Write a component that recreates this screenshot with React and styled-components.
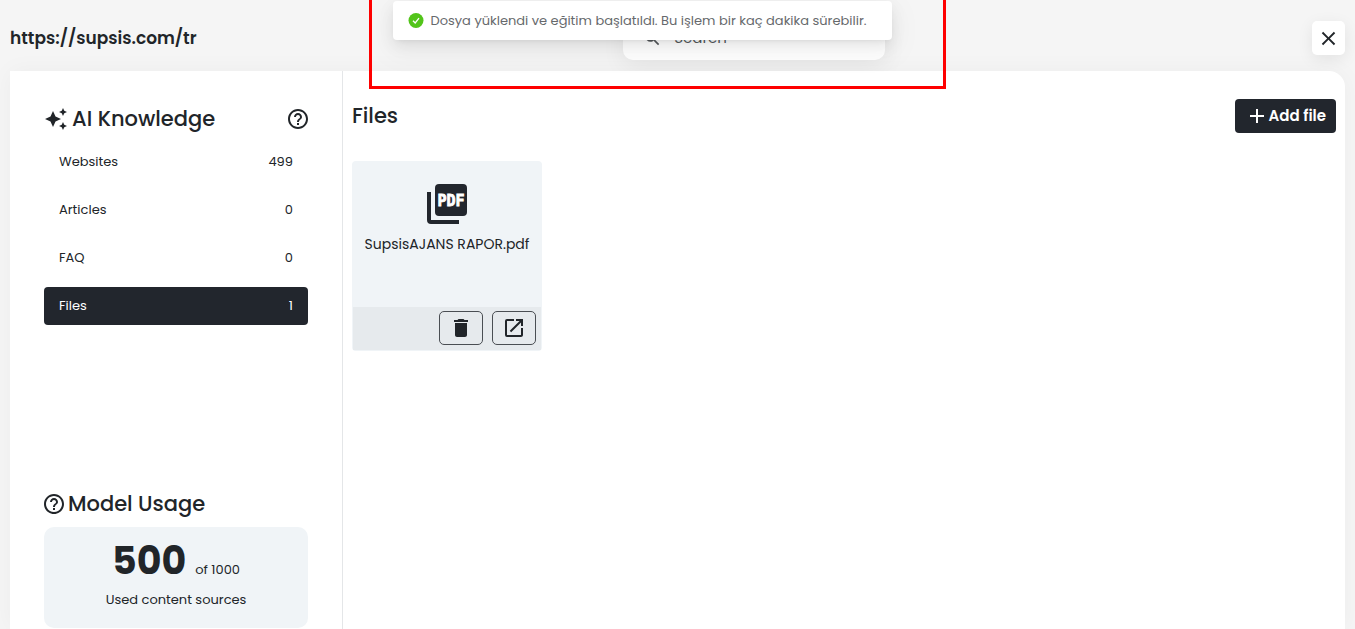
import React from "react";
import styled, { createGlobalStyle } from "styled-components";
import {
  MdAdd,
  MdAutoAwesome,
  MdClose,
  MdDelete,
  MdHelpOutline,
  MdOpenInNew,
  MdSearch,
} from "react-icons/md";

const ink = "#212529";
const dark = "#22262d";
const tint = "#f0f4f7";

const GlobalStyle = createGlobalStyle`
  *, *::before, *::after { box-sizing: border-box; }
  body {
    margin: 0;
    background: #f5f5f5;
    color: ${ink};
    font-family: Poppins, Inter, "Open Sans", sans-serif;
    font-size: 13px;
    line-height: 22px;
  }
  button, input { font: inherit; color: inherit; }
  h1, h2, p { margin: 0; }
  svg { flex-shrink: 0; }
`;

const Page = styled.div`
  position: relative;
  display: flex;
  flex-direction: column;
  min-height: 100vh;
  padding: 0 10px;
  overflow: hidden;
`;

const Header = styled.header`
  display: flex;
  align-items: center;
  justify-content: space-between;
  padding: 16px 0 11px;
`;

const SiteTitle = styled.h1`
  font-size: 17px;
  line-height: 28px;
  font-weight: 600;
`;

const SearchBox = styled.label`
  display: flex;
  align-items: center;
  gap: 12px;
  width: 262px;
  height: 44px;
  padding: 0 20px;
  border-radius: 10px;
  background: #fff;
  color: #55595c;
  font-size: 15px;
  box-shadow: 0 8px 24px rgba(0, 0, 0, 0.06);
`;

const SearchInput = styled.input`
  flex: 1;
  min-width: 0;
  padding: 0;
  border: 0;
  outline: 0;
  background: transparent;
  &::placeholder {
    color: #55595c;
    opacity: 1;
  }
`;

const CloseButton = styled.button`
  display: grid;
  place-items: center;
  width: 33px;
  height: 34px;
  padding: 0;
  border: 0;
  border-radius: 5px;
  background: #fff;
  box-shadow: 0 4px 16px rgba(0, 0, 0, 0.08);
`;

const Panel = styled.div`
  flex: 1;
  display: grid;
  grid-template-columns: 333px 1fr;
  border-radius: 0 16px 0 0;
  background: #fff;
  box-shadow: 0 0 24px rgba(0, 0, 0, 0.04);
`;

const Sidebar = styled.aside`
  display: flex;
  flex-direction: column;
  padding: 32px 34px 1px;
  border-right: 1px solid #e4e6e8;
`;

const SectionTitle = styled.h2`
  display: flex;
  align-items: center;
  gap: 4px;
  font-size: 21px;
  line-height: 32px;
  font-weight: 500;
`;

const SidebarHead = styled.div`
  display: flex;
  align-items: center;
  justify-content: space-between;
  margin-right: -2px;
`;

const IconButton = styled.button`
  display: flex;
  padding: 0;
  border: 0;
  background: transparent;
`;

const Nav = styled.nav`
  display: flex;
  flex-direction: column;
  gap: 10px;
  padding: 8px 0 40px;
`;

const NavItem = styled.a`
  display: flex;
  justify-content: space-between;
  padding: 8px 15px;
  border-radius: 4px;
  text-decoration: none;
  color: ${(p) => (p.$active ? "#fff" : ink)};
  background: ${(p) => (p.$active ? dark : "transparent")};
`;

const Usage = styled.section`
  display: flex;
  flex-direction: column;
  gap: 7px;
  margin-top: auto;
`;

const UsageTitle = styled(SectionTitle)`
  gap: 2px;
  margin-left: -2px;
`;

const UsageCard = styled.div`
  display: flex;
  flex-direction: column;
  align-items: center;
  gap: 4px;
  padding: 10px 16px 17px;
  border-radius: 10px;
  background: ${tint};
`;

const UsageCount = styled.p`
  display: flex;
  align-items: baseline;
  gap: 9px;
`;

const UsageNumber = styled.strong`
  font-size: 38px;
  line-height: 48px;
  font-weight: 700;
`;

const Main = styled.main`
  padding: 28px 9px;
`;

const MainHead = styled.div`
  display: flex;
  align-items: center;
  justify-content: space-between;
`;

const AddButton = styled.button`
  display: flex;
  align-items: center;
  height: 34px;
  padding: 0 10px;
  border: 0;
  border-radius: 4px;
  background: ${dark};
  color: #fff;
  font-size: 15px;
  font-weight: 600;
`;

const FileGrid = styled.div`
  display: flex;
  flex-wrap: wrap;
  gap: 16px;
  padding-top: 28px;
`;

const FileCard = styled.article`
  display: flex;
  flex-direction: column;
  justify-content: space-between;
  width: 190px;
  min-height: 190px;
  padding: 0 1px 1px;
  border-radius: 4px;
  background: ${tint};
`;

const FileBody = styled.div`
  display: flex;
  flex-direction: column;
  align-items: center;
  gap: 5px;
  padding-top: 19px;
`;

const FileName = styled.p`
  font-size: 14px;
  white-space: nowrap;
`;

const FileActions = styled.div`
  display: flex;
  justify-content: flex-end;
  gap: 9px;
  padding: 4px 5px 5px;
  background: #e6eaed;
`;

const OutlineButton = styled.button`
  display: grid;
  place-items: center;
  width: 44px;
  height: 34px;
  padding: 0;
  border: 1px solid #4a4e53;
  border-radius: 5px;
  background: transparent;
`;

const Toast = styled.div`
  position: absolute;
  top: 1px;
  left: calc(50% - 285px);
  z-index: 2;
  display: flex;
  align-items: center;
  gap: 7px;
  width: 499px;
  height: 39px;
  padding: 0 15px;
  border-radius: 4px;
  background: #fff;
  color: #66696c;
  white-space: nowrap;
  box-shadow: 0 3px 6px -4px rgba(0, 0, 0, 0.12),
    0 6px 16px rgba(0, 0, 0, 0.08), 0 9px 28px 8px rgba(0, 0, 0, 0.03);
`;

const Highlight = styled.div`
  position: absolute;
  top: 0;
  left: calc(50% - 309px);
  z-index: 1;
  width: 577px;
  height: 89px;
  border: 3px solid #fe0000;
  border-top: 0;
  pointer-events: none;
`;

const items = [
  { name: "Websites", count: 499 },
  { name: "Articles", count: 0 },
  { name: "FAQ", count: 0 },
  { name: "Files", count: 1, active: true },
];

function PdfIcon() {
  return (
    <svg width="48" height="48" viewBox="0 0 48 48" aria-hidden="true">
      <path d="M4 12h4v28h28v4H8a4 4 0 0 1-4-4z" fill={dark} />
      <rect x="12" y="4" width="32" height="32" rx="4" fill={dark} />
      <text
        x="28"
        y="26"
        textAnchor="middle"
        fill="#fff"
        stroke="#fff"
        strokeWidth="0.8"
        fontFamily="'DejaVu Sans Mono', monospace"
        fontSize="15"
        fontWeight="700"
      >
        PDF
      </text>
    </svg>
  );
}

function CheckBadge() {
  return (
    <svg width="16" height="16" viewBox="0 0 16 16" aria-hidden="true">
      <circle cx="8" cy="7.5" r="7.5" fill="#52c41a" />
      <path d="M5 7.7l2.2 2.3L11 5.2" fill="none" stroke="#fff" strokeWidth="1.3" />
    </svg>
  );
}

export default function App() {
  return (
    <>
      <GlobalStyle />
      <Page>
        <Header>
          <SiteTitle>https://supsis.com/tr</SiteTitle>
          <SearchBox>
            <MdSearch size={19} aria-hidden="true" />
            <SearchInput type="text" placeholder="Search" aria-label="Search" />
          </SearchBox>
          <CloseButton type="button" aria-label="Close">
            <MdClose size={23} />
          </CloseButton>
        </Header>

        <Panel>
          <Sidebar>
            <SidebarHead>
              <SectionTitle>
                <MdAutoAwesome size={24} />
                AI Knowledge
              </SectionTitle>
              <IconButton type="button" aria-label="Help">
                <MdHelpOutline size={24} />
              </IconButton>
            </SidebarHead>
            <Nav>
              {items.map((item) => (
                <NavItem key={item.name} href="#" $active={item.active}>
                  <span>{item.name}</span>
                  <span>{item.count}</span>
                </NavItem>
              ))}
            </Nav>
            <Usage>
              <UsageTitle>
                <MdHelpOutline size={24} />
                Model Usage
              </UsageTitle>
              <UsageCard>
                <UsageCount>
                  <UsageNumber>500</UsageNumber>
                  <span>of 1000</span>
                </UsageCount>
                <p>Used content sources</p>
              </UsageCard>
            </Usage>
          </Sidebar>

          <Main>
            <MainHead>
              <SectionTitle>Files</SectionTitle>
              <AddButton type="button">
                <MdAdd size={24} />
                Add file
              </AddButton>
            </MainHead>
            <FileGrid>
              <FileCard>
                <FileBody>
                  <PdfIcon />
                  <FileName>SupsisAJANS RAPOR.pdf</FileName>
                </FileBody>
                <FileActions>
                  <OutlineButton type="button" aria-label="Delete file">
                    <MdDelete size={24} />
                  </OutlineButton>
                  <OutlineButton type="button" aria-label="Open file">
                    <MdOpenInNew size={24} />
                  </OutlineButton>
                </FileActions>
              </FileCard>
            </FileGrid>
          </Main>
        </Panel>

        <Highlight />
        <Toast role="status">
          <CheckBadge />
          <span>Dosya yüklendi ve eğitim başlatıldı. Bu işlem bir kaç dakika sürebilir.</span>
        </Toast>
      </Page>
    </>
  );
}
